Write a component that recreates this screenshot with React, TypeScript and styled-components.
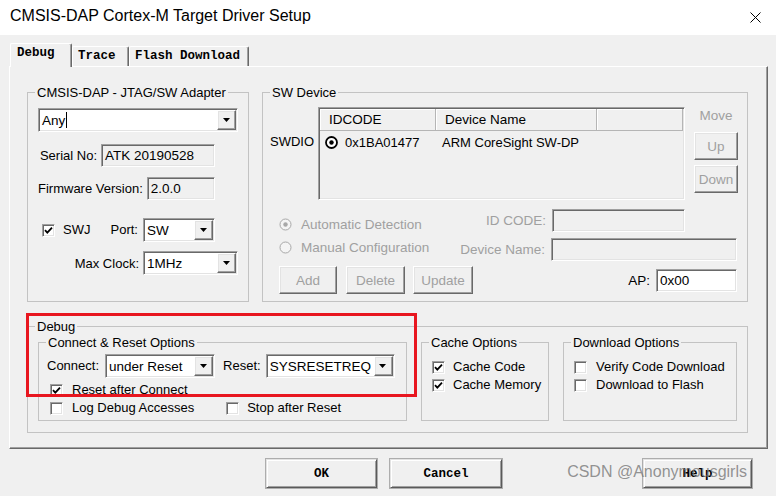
import React from 'react';
import styled, { createGlobalStyle, css } from 'styled-components';

const GlobalStyle = createGlobalStyle`
  * { box-sizing: border-box; }
  html, body { margin: 0; padding: 0; background: #f0f0f0; }
  body {
    font-family: "Liberation Sans", Arial, sans-serif;
    font-size: 13px;
    color: #000;
  }
`;

const sunken = css`
  border: 1px solid;
  border-color: #a0a0a0 #ffffff #ffffff #a0a0a0;
  box-shadow: inset 1px 1px 0 #696969, inset -1px -1px 0 #e3e3e3;
`;

const raised = css`
  border: 1px solid;
  border-color: #ffffff #696969 #696969 #ffffff;
  box-shadow: inset -1px -1px 0 #a0a0a0, inset 1px 1px 0 #e3e3e3;
`;

const Window = styled.div`
  position: relative;
  width: 776px;
  height: 496px;
  background: #f0f0f0;
  overflow: hidden;
`;

const TitleBar = styled.div`
  display: flex;
  align-items: center;
  justify-content: space-between;
  height: 35px;
  padding: 0 15px 0 10px;
  background: #ffffff;
`;

const Title = styled.div`
  font-size: 16px;
  margin-top: -3px;
`;

const Body = styled.div`
  padding: 8px 8px 0 9px;
`;

const TabStrip = styled.div`
  position: relative;
  z-index: 1;
  display: flex;
  align-items: flex-end;
  height: 23px;
  padding-left: 1px;
`;

const Tab = styled.div<{ $active?: boolean; $w: number }>`
  width: ${(p) => p.$w}px;
  height: ${(p) => (p.$active ? 24 : 20)}px;
  margin-bottom: ${(p) => (p.$active ? -1 : 0)}px;
  padding: ${(p) => (p.$active ? '2px 0 0 6px' : '2px 0 0 5px')};
  font-family: "Liberation Mono", "Courier New", monospace;
  font-weight: bold;
  font-size: 12.5px;
  line-height: 15px;
  white-space: nowrap;
  background: #f0f0f0;
  border-top: 1px solid #ffffff;
  border-left: 1px solid #ffffff;
  border-right: 1px solid #696969;
  box-shadow: inset -1px 0 0 #a0a0a0;
  border-radius: 2px 2px 0 0;
`;

const Panel = styled.div`
  position: relative;
  height: 383px;
  padding: 18px 19px 0 17px;
  border: 1px solid;
  border-color: #ffffff #696969 #696969 #ffffff;
  box-shadow: inset -1px -1px 0 #a0a0a0;
`;

const TopRow = styled.div`
  display: flex;
  gap: 13px;
  height: 217px;
`;

const Group = styled.fieldset<{ $w?: number; $h?: number }>`
  margin: 0;
  padding: 0;
  min-width: 0;
  border: 1px solid #c3c3c3;
  ${(p) => (p.$w ? `width: ${p.$w}px; flex: none;` : 'flex: 1;')}
  ${(p) => (p.$h ? `height: ${p.$h}px;` : '')}
`;

const Legend = styled.legend`
  margin-left: 7px;
  padding: 0 2px;
  font-size: 13px;
  line-height: 15px;
`;

const Column = styled.div<{ $pl: number; $pr?: number }>`
  display: flex;
  flex-direction: column;
  padding: 0 ${(p) => p.$pr ?? 0}px 0 ${(p) => p.$pl}px;
`;

const FieldRow = styled.div<{ $mt: number; $mr?: number; $h?: number }>`
  display: flex;
  align-items: center;
  justify-content: flex-end;
  gap: 4px;
  margin-top: ${(p) => p.$mt}px;
  margin-right: ${(p) => p.$mr ?? 0}px;
  height: ${(p) => p.$h ?? 23}px;
`;

const Label = styled.span<{ $dim?: boolean }>`
  white-space: nowrap;
  line-height: 15px;
  color: ${(p) => (p.$dim ? '#a0a0a0' : '#000')};
`;

const Field = styled.div<{ $w: number; $h?: number; $white?: boolean }>`
  ${sunken};
  width: ${(p) => p.$w}px;
  height: ${(p) => p.$h ?? 23}px;
  padding: 0 3px;
  display: flex;
  align-items: center;
  background: ${(p) => (p.$white ? '#ffffff' : '#f0f0f0')};
  font-size: 13.5px;
  white-space: nowrap;
`;

const ComboBox = styled.div<{ $w: number }>`
  ${sunken};
  width: ${(p) => p.$w}px;
  height: 24px;
  display: flex;
  align-items: stretch;
  background: #ffffff;
  flex: none;
`;

const ComboText = styled.div`
  flex: 1;
  display: flex;
  align-items: center;
  padding-left: 3px;
  font-size: 13.5px;
  white-space: nowrap;
  overflow: hidden;
`;

const Caret = styled.span`
  display: inline-block;
  width: 1px;
  height: 16px;
  margin-left: 1px;
  background: #000;
`;

const ComboButton = styled.div`
  ${raised};
  width: 19px;
  flex: none;
  margin: 1px;
  display: flex;
  align-items: center;
  justify-content: center;
  background: #f0f0f0;
`;

const CheckRow = styled.div<{ $ml?: number; $gap?: number }>`
  display: flex;
  align-items: center;
  gap: ${(p) => p.$gap ?? 9}px;
  height: 18px;
  margin-left: ${(p) => p.$ml ?? 0}px;
  white-space: nowrap;
`;

const CheckBox = styled.span`
  ${sunken};
  width: 13px;
  height: 13px;
  flex: none;
  display: flex;
  align-items: center;
  justify-content: center;
  background: #ffffff;
`;

const SwjRow = styled.div`
  display: flex;
  align-items: center;
  height: 24px;
  margin-top: 18px;
  padding-right: 23px;
`;

const PushRight = styled.div`
  display: flex;
  align-items: center;
  gap: 5px;
  margin-left: auto;
`;

const DeviceTop = styled.div`
  display: flex;
  align-items: flex-start;
  margin-top: 7px;
  padding-left: 7px;
`;

const SideLabel = styled.span`
  width: 48px;
  margin-top: 27px;
  line-height: 15px;
`;

const ListView = styled.div`
  ${sunken};
  width: 367px;
  height: 93px;
  padding: 1px;
`;

const ListHeader = styled.div`
  display: flex;
  height: 22px;
`;

const HeadCell = styled.div<{ $w: number }>`
  width: ${(p) => p.$w}px;
  flex: none;
  padding: 3px 0 0 9px;
  line-height: 15px;
  font-size: 13.5px;
  border-right: 1px solid #b5b5b5;
  border-bottom: 1px solid #b5b5b5;
  box-shadow: inset 1px 1px 0 #ffffff;
`;

const ListRow = styled.div`
  display: flex;
  align-items: center;
  height: 22px;
  padding-left: 5px;
  font-size: 13px;
`;

const ListCell = styled.span<{ $w: number; $ml?: number }>`
  width: ${(p) => p.$w}px;
  margin-left: ${(p) => p.$ml ?? 0}px;
  flex: none;
  white-space: nowrap;
`;

const MoveColumn = styled.div`
  display: flex;
  flex-direction: column;
  align-items: stretch;
  width: 44px;
  margin-left: 9px;
`;

const MoveLabel = styled.span`
  margin-top: 1px;
  text-align: center;
  line-height: 15px;
  font-size: 13.5px;
  color: #a0a0a0;
`;

const SmallButton = styled.div<{ $w?: number; $mt?: number; $ml?: number }>`
  ${raised};
  width: ${(p) => (p.$w ? `${p.$w}px` : 'auto')};
  height: 28px;
  margin-top: ${(p) => p.$mt ?? 0}px;
  margin-left: ${(p) => p.$ml ?? 0}px;
  display: flex;
  align-items: center;
  justify-content: center;
  color: #a0a0a0;
  font-size: 13.5px;
  background: #f0f0f0;
`;

const DeviceMid = styled.div`
  display: flex;
  margin-top: 9px;
  padding-right: 10px;
`;

const RadioColumn = styled.div`
  display: flex;
  flex-direction: column;
  gap: 7px;
  padding: 7px 0 0 16px;
`;

const RadioRow = styled.div`
  display: flex;
  align-items: center;
  gap: 9px;
  height: 16px;
  font-size: 13.5px;
  color: #a0a0a0;
  white-space: nowrap;
`;

const FieldColumn = styled.div`
  flex: 1;
  display: flex;
  flex-direction: column;
  align-items: flex-end;
`;

const DimRow = styled(FieldRow)`
  gap: 6px;
  font-size: 13.5px;
`;

const DeviceBottom = styled.div`
  display: flex;
  align-items: center;
  margin-top: 5px;
  padding: 0 10px 0 16px;
`;

const ApBox = styled.div`
  display: flex;
  align-items: center;
  gap: 6px;
  margin-left: auto;
  font-size: 13.5px;
`;

const DebugRow = styled.div`
  display: flex;
  gap: 14px;
  height: 86px;
  margin-top: 1px;
  padding: 0 10px;
`;

const ConnectLine = styled.div`
  display: flex;
  align-items: center;
  height: 24px;
  margin-top: 4px;
  padding-left: 8px;
`;

const ChecksBlock = styled.div<{ $mt: number; $pl: number }>`
  display: flex;
  flex-direction: column;
  margin-top: ${(p) => p.$mt}px;
  padding-left: ${(p) => p.$pl}px;
`;

const CheckPair = styled.div`
  display: flex;
`;

const BigText = styled.span<{ $ml?: number; $mr?: number }>`
  font-size: 13px;
  line-height: 16px;
  margin-left: ${(p) => p.$ml ?? 0}px;
  margin-right: ${(p) => p.$mr ?? 0}px;
`;

const RedMark = styled.div`
  position: absolute;
  left: 16px;
  top: 246px;
  width: 391px;
  height: 84px;
  border: 3px solid #e8161f;
  pointer-events: none;
`;

const ButtonRow = styled.div`
  display: flex;
  margin-top: 10px;
  padding: 0 16px 0 257px;
`;

const DialogButton = styled.div<{ $w: number; $ml?: number; $auto?: boolean }>`
  width: ${(p) => p.$w}px;
  height: 29px;
  margin-left: ${(p) => (p.$auto ? 'auto' : `${p.$ml ?? 0}px`)};
  display: flex;
  align-items: center;
  justify-content: center;
  font-family: "Liberation Mono", "Courier New", monospace;
  font-weight: bold;
  font-size: 12.5px;
  border: 1px solid;
  border-color: #e3e3e3 #5a5a5a #5a5a5a #e3e3e3;
  box-shadow: inset 1px 1px 0 #ffffff, inset -1px -1px 0 #a0a0a0, 0 0 0 1px #adadad;
  background: #f0f0f0;
`;

const Watermark = styled.div`
  position: absolute;
  right: 29px;
  top: 463px;
  font-size: 16px;
  color: rgba(120, 120, 120, 0.8);
  white-space: nowrap;
  pointer-events: none;
`;

const Arrow = () => (
  <svg width="8" height="4" viewBox="0 0 8 4">
    <path d="M0 0 H7 L3.5 4 Z" fill="#000" />
  </svg>
);

const Check = () => (
  <svg width="11" height="11" viewBox="0 0 11 11">
    <path d="M2 5.2 L4.3 7.6 L9 2.6" fill="none" stroke="#000" strokeWidth="1.8" />
  </svg>
);

const Radio = ({ on, dim }: { on?: boolean; dim?: boolean }) => {
  const c = dim ? '#a8a8a8' : '#000';
  return (
    <svg width="13" height="13" viewBox="0 0 13 13">
      <circle cx="6.5" cy="6.5" r="5.5" fill={dim ? '#f4f4f4' : '#fff'} stroke={c} strokeWidth={dim ? 1 : 1.8} />
      {on && <circle cx="6.5" cy="6.5" r="2.2" fill={c} />}
    </svg>
  );
};

const Combo = ({ w, text, caret }: { w: number; text: string; caret?: boolean }) => (
  <ComboBox $w={w}>
    <ComboText>
      {text}
      {caret && <Caret />}
    </ComboText>
    <ComboButton>
      <Arrow />
    </ComboButton>
  </ComboBox>
);

const Option = ({ label, checked, ml, gap }: { label: string; checked?: boolean; ml?: number; gap?: number }) => (
  <CheckRow $ml={ml} $gap={gap}>
    <CheckBox>{checked && <Check />}</CheckBox>
    <BigText>{label}</BigText>
  </CheckRow>
);

export default function App() {
  return (
    <Window>
      <GlobalStyle />
      <TitleBar>
        <Title>CMSIS-DAP Cortex-M Target Driver Setup</Title>
        <svg width="11" height="11" viewBox="0 0 11 11">
          <path d="M0.5 0.5 L10.5 10.5 M10.5 0.5 L0.5 10.5" stroke="#000" strokeWidth="1" />
        </svg>
      </TitleBar>

      <Body>
        <TabStrip>
          <Tab $active $w={62}>Debug</Tab>
          <Tab $w={57}>Trace</Tab>
          <Tab $w={120}>Flash Download</Tab>
        </TabStrip>

        <Panel>
          <TopRow>
            <Group $w={222}>
              <Legend>CMSIS-DAP - JTAG/SW Adapter</Legend>
              <Column $pl={10} $pr={10}>
                <FieldRow $mt={8} $h={24}>
                  <Combo w={200} text="Any" caret />
                </FieldRow>
                <FieldRow $mt={12} $mr={23}>
                  <Label>Serial No:</Label>
                  <Field $w={114}>ATK 20190528</Field>
                </FieldRow>
                <FieldRow $mt={10} $mr={23}>
                  <Label>Firmware Version:</Label>
                  <Field $w={73}>2.0.0</Field>
                </FieldRow>
                <SwjRow>
                  <Option label="SWJ" checked ml={4} gap={8} />
                  <PushRight>
                    <BigText>Port:</BigText>
                    <Combo w={72} text="SW" />
                  </PushRight>
                </SwjRow>
                <FieldRow $mt={9} $h={24}>
                  <Label>Max Clock:</Label>
                  <Combo w={95} text="1MHz" />
                </FieldRow>
              </Column>
            </Group>

            <Group>
              <Legend>SW Device</Legend>
              <DeviceTop>
                <SideLabel>SWDIO</SideLabel>
                <ListView>
                  <ListHeader>
                    <HeadCell $w={116}>IDCODE</HeadCell>
                    <HeadCell $w={161}>Device Name</HeadCell>
                    <HeadCell $w={86} />
                  </ListHeader>
                  <ListRow>
                    <Radio on />
                    <ListCell $w={97} $ml={7}>0x1BA01477</ListCell>
                    <ListCell $w={160}>ARM CoreSight SW-DP</ListCell>
                  </ListRow>
                </ListView>
                <MoveColumn>
                  <MoveLabel>Move</MoveLabel>
                  <SmallButton $mt={9}>Up</SmallButton>
                  <SmallButton $mt={5}>Down</SmallButton>
                </MoveColumn>
              </DeviceTop>

              <DeviceMid>
                <RadioColumn>
                  <RadioRow>
                    <Radio on dim />
                    Automatic Detection
                  </RadioRow>
                  <RadioRow>
                    <Radio dim />
                    Manual Configuration
                  </RadioRow>
                </RadioColumn>
                <FieldColumn>
                  <DimRow $mt={0} $mr={52}>
                    <Label $dim>ID CODE:</Label>
                    <Field $w={133} />
                  </DimRow>
                  <DimRow $mt={6}>
                    <Label $dim>Device Name:</Label>
                    <Field $w={186} />
                  </DimRow>
                </FieldColumn>
              </DeviceMid>

              <DeviceBottom>
                <SmallButton $w={58}>Add</SmallButton>
                <SmallButton $w={59} $ml={9}>Delete</SmallButton>
                <SmallButton $w={60} $ml={8}>Update</SmallButton>
                <ApBox>
                  AP:
                  <Field $w={81} $white>0x00</Field>
                </ApBox>
              </DeviceBottom>
            </Group>
          </TopRow>

          <Group $h={114} style={{ marginTop: 17 }}>
            <Legend>Debug</Legend>
            <DebugRow>
              <Group $w={369}>
                <Legend>Connect &amp; Reset Options</Legend>
                <ConnectLine>
                  <BigText $mr={6}>Connect:</BigText>
                  <Combo w={110} text="under Reset" />
                  <BigText $ml={8} $mr={5}>Reset:</BigText>
                  <Combo w={129} text="SYSRESETREQ" />
                </ConnectLine>
                <ChecksBlock $mt={3} $pl={11}>
                  <Option label="Reset after Connect" checked />
                  <CheckPair>
                    <Option label="Log Debug Accesses" />
                    <Option label="Stop after Reset" ml={32} gap={8} />
                  </CheckPair>
                </ChecksBlock>
              </Group>

              <Group $w={128}>
                <Legend>Cache Options</Legend>
                <ChecksBlock $mt={8} $pl={10}>
                  <Option label="Cache Code" checked gap={8} />
                  <Option label="Cache Memory" checked gap={8} />
                </ChecksBlock>
              </Group>

              <Group>
                <Legend>Download Options</Legend>
                <ChecksBlock $mt={8} $pl={10}>
                  <Option label="Verify Code Download" />
                  <Option label="Download to Flash" />
                </ChecksBlock>
              </Group>
            </DebugRow>
          </Group>

          <RedMark />
        </Panel>

        <ButtonRow>
          <DialogButton $w={111}>OK</DialogButton>
          <DialogButton $w={112} $ml={13}>Cancel</DialogButton>
          <DialogButton $w={109} $auto>Help</DialogButton>
        </ButtonRow>
      </Body>

      <Watermark>CSDN @Anonymousgirls</Watermark>
    </Window>
  );
}
